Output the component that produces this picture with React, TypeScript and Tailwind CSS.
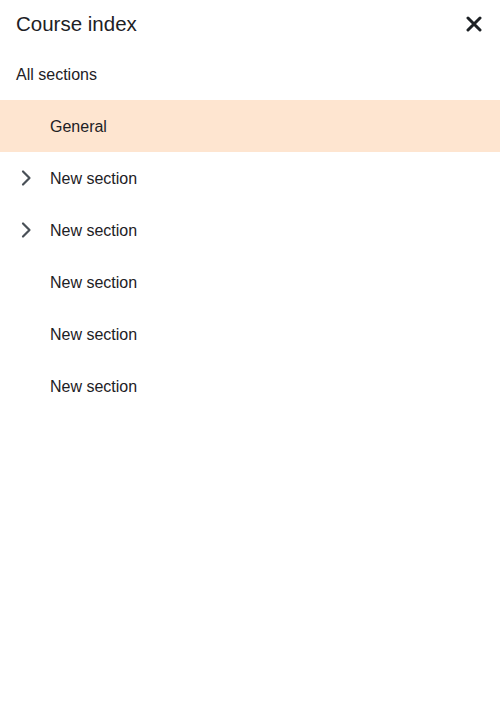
import React from 'react';

const sections = [
  { name: 'General', expandable: false, active: true },
  { name: 'New section', expandable: true, active: false },
  { name: 'New section', expandable: true, active: false },
  { name: 'New section', expandable: false, active: false },
  { name: 'New section', expandable: false, active: false },
  { name: 'New section', expandable: false, active: false },
];

const Chevron: React.FC = () => (
  <svg width="16" height="18" viewBox="0 0 16 18" fill="none">
    <path d="M5 2.5 11.5 9 5 15.5" stroke="#495057" strokeWidth="2.2" strokeLinecap="round" strokeLinejoin="round" />
  </svg>
);

const CloseIcon: React.FC = () => (
  <svg width="16" height="16" viewBox="0 0 16 16" fill="none">
    <path d="M2 2l12 12M14 2 2 14" stroke="#1d2125" strokeWidth="3" strokeLinecap="round" />
  </svg>
);

const App: React.FC = () => {
  return (
    <div className="w-[500px] h-[720px] bg-white text-[#1d2125] font-['Liberation_Sans',Arial,sans-serif]">
      <div className="flex items-center justify-between h-12 pl-4 pr-[18px]">
        <h2 className="text-[20.5px] leading-none pt-[1px]">Course index</h2>
        <button className="flex items-center justify-center">
          <CloseIcon />
        </button>
      </div>
      <div className="flex items-center h-[52px] px-4 pt-[2px] text-base">All sections</div>
      <ul>
        {sections.map((s, i) => (
          <li
            key={i}
            className={`flex items-center h-[52px] text-base ${s.active ? 'bg-[#fee5d0]' : ''}`}
          >
            <span className="w-[50px] flex items-center pl-[18px]">
              {s.expandable && <Chevron />}
            </span>
            <span className="pt-[2px]">{s.name}</span>
          </li>
        ))}
      </ul>
    </div>
  );
};

export default App;
